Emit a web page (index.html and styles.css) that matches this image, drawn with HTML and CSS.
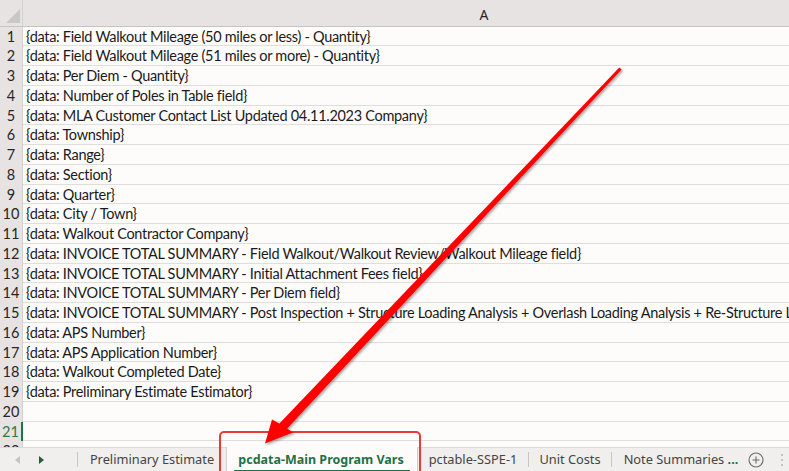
FILE: index.html
```html
<!DOCTYPE html>
<html>
<head>
<meta charset="utf-8">
<link rel="stylesheet" href="styles.css">
</head>
<body>
<div class="sheet">
  <div class="colhead">
    <div class="corner"><svg width="22" height="26" viewBox="0 0 22 26"><polygon points="20,9 20,23 6,23" fill="#c9c7c6"/></svg></div>
    <div class="colA">A</div>
  </div>
  <div class="rows">
    <div class="row"><div class="rh">1</div><div class="cell">{data: Field Walkout Mileage (50 miles or less) - Quantity}</div></div>
    <div class="row"><div class="rh">2</div><div class="cell">{data: Field Walkout Mileage (51 miles or more) - Quantity}</div></div>
    <div class="row"><div class="rh">3</div><div class="cell">{data: Per Diem - Quantity}</div></div>
    <div class="row"><div class="rh">4</div><div class="cell">{data: Number of Poles in Table field}</div></div>
    <div class="row"><div class="rh">5</div><div class="cell">{data: MLA Customer Contact List Updated 04.11.2023 Company}</div></div>
    <div class="row"><div class="rh">6</div><div class="cell">{data: Township}</div></div>
    <div class="row"><div class="rh">7</div><div class="cell">{data: Range}</div></div>
    <div class="row"><div class="rh">8</div><div class="cell">{data: Section}</div></div>
    <div class="row"><div class="rh">9</div><div class="cell">{data: Quarter}</div></div>
    <div class="row"><div class="rh">10</div><div class="cell">{data: City / Town}</div></div>
    <div class="row"><div class="rh">11</div><div class="cell">{data: Walkout Contractor Company}</div></div>
    <div class="row"><div class="rh">12</div><div class="cell">{data: INVOICE TOTAL SUMMARY - Field Walkout/Walkout Review/Walkout Mileage field}</div></div>
    <div class="row"><div class="rh">13</div><div class="cell">{data: INVOICE TOTAL SUMMARY - Initial Attachment Fees field}</div></div>
    <div class="row"><div class="rh">14</div><div class="cell">{data: INVOICE TOTAL SUMMARY - Per Diem field}</div></div>
    <div class="row"><div class="rh">15</div><div class="cell">{data: INVOICE TOTAL SUMMARY - Post Inspection + Structure Loading Analysis + Overlash Loading Analysis + Re-Structure Loading Analysis}</div></div>
    <div class="row"><div class="rh">16</div><div class="cell">{data: APS Number}</div></div>
    <div class="row"><div class="rh">17</div><div class="cell">{data: APS Application Number}</div></div>
    <div class="row"><div class="rh">18</div><div class="cell">{data: Walkout Completed Date}</div></div>
    <div class="row"><div class="rh">19</div><div class="cell">{data: Preliminary Estimate Estimator}</div></div>
    <div class="row"><div class="rh">20</div><div class="cell"></div></div>
    <div class="row active"><div class="rh">21</div><div class="cell"></div></div>
    <div class="row"><div class="rh">22</div><div class="cell"></div></div>
  </div>
  <div class="tabbar">
    <div class="nav">
      <svg width="8" height="10" viewBox="0 0 8 10" class="navl"><polygon points="6,1 6,9 1,5" fill="#c4c4c4"/></svg>
      <svg width="8" height="10" viewBox="0 0 8 10" class="navr"><polygon points="2,1 2,9 7,5" fill="#1f5f3a"/></svg>
    </div>
    <div class="sep"></div>
    <div class="tab t1">Preliminary Estimate</div>
    <div class="tab t2 current"><span>pcdata-Main Program Vars</span></div>
    <div class="tab t3">pctable-SSPE-1</div>
    <div class="sep"></div>
    <div class="tab t4">Unit Costs</div>
    <div class="sep"></div>
    <div class="tab t5">Note Summaries <b class="more">...</b></div>
    <div class="plus"><svg width="16" height="16" viewBox="0 0 16 16"><circle cx="8" cy="8" r="7" fill="none" stroke="#6b6b6b" stroke-width="1.1"/><path d="M8 4.5v7M4.5 8h7" stroke="#6b6b6b" stroke-width="1.1"/></svg></div>
    <div class="kebab"><svg width="4" height="14" viewBox="0 0 4 14"><circle cx="2" cy="2" r="1" fill="#b5b5b5"/><circle cx="2" cy="7" r="1" fill="#b5b5b5"/><circle cx="2" cy="12" r="1" fill="#b5b5b5"/></svg></div>
  </div>
  <div class="callout"></div>
  <svg class="arrow" width="789" height="471" viewBox="0 0 789 471">
    <defs>
      <filter id="sh" x="-10%" y="-10%" width="130%" height="130%">
        <feDropShadow dx="1.5" dy="1.5" stdDeviation="1.2" flood-color="#000" flood-opacity="0.35"/>
      </filter>
    </defs>
    <polygon filter="url(#sh)" fill="#ff0000" points="619.3,67.6 621.6,69.6 287.2,428.6 293,432.5 265,443.5 272,419.5 279.4,423.6"/>
  </svg>
</div>
</body>
</html>
```

FILE: styles.css
```css
html, body {
  margin: 0;
  padding: 0;
}
body {
  width: 789px;
  height: 471px;
  overflow: hidden;
  background: #fefcfb;
}
.sheet {
  position: relative;
  width: 789px;
  height: 471px;
  overflow: hidden;
  display: flex;
  flex-direction: column;
}
.colhead {
  height: 26.5px;
  box-sizing: border-box;
  display: flex;
  background: #e6e3e2;
  border-bottom: 1px solid #c6c4c3;
  flex: none;
}
.corner {
  width: 23px;
  flex: none;
  box-sizing: border-box;
  border-right: 1px solid #d3d1d0;
}
.corner svg { display: block; }
.colA {
  width: 922px;
  flex: none;
  text-align: center;
  font-family: "Noto Sans", sans-serif;
  font-size: 14px;
  color: #262626;
  line-height: 26px;
  padding-top: 2px;
  box-sizing: border-box;
}
.rows {
  flex: 1;
  overflow: hidden;
  display: flex;
  flex-direction: column;
}
.row {
  height: 19.75px;
  flex: none;
  display: flex;
  box-sizing: border-box;
  border-bottom: 1px solid #e0dedd;
}
.rh {
  width: 23px;
  flex: none;
  box-sizing: border-box;
  background: #e6e3e2;
  border-right: 1px solid #d3d1d0;
  text-align: center;
  font-family: "Lato", sans-serif;
  font-size: 14.5px;
  color: #262626;
  line-height: 20px;
  margin-bottom: -1px;
}
.row.active .rh {
  color: #2b7a4b;
  border-right: 2px solid #217346;
}
.cell {
  flex: none;
  width: 1000px;
  padding-left: 3px;
  white-space: nowrap;
  overflow: hidden;
  font-family: "Lato", sans-serif;
  font-size: 14.5px;
  letter-spacing: -0.3px;
  color: #1a1a1a;
  line-height: 20px;
}
.tabbar {
  height: 24px;
  flex: none;
  box-sizing: border-box;
  background: #f0efee;
  border-top: 1px solid #dcdad9;
  display: flex;
  align-items: center;
  font-family: "Noto Sans", sans-serif;
  font-size: 12.8px;
  color: #444;
}
.nav {
  width: 77px;
  flex: none;
  display: flex;
  align-items: center;
}
.navl { margin-left: 14px; }
.navr { margin-left: 15px; }
.nav svg { display: block; }
.sep {
  width: 1px;
  height: 15px;
  background: #c8c6c5;
  flex: none;
}
.tab {
  flex: none;
  text-align: center;
  white-space: nowrap;
  line-height: 23px;
}
.t1 { width: 148px; }
.t2 { width: 192px; }
.t3 { width: 110px; }
.t4 { width: 82px; }
.t5 { width: 136px; padding-left: 2px; box-sizing: border-box; }
.current {
  align-self: stretch;
  background: #fefcfb;
  box-sizing: border-box;
  border-left: 1px solid #d0cecd;
  border-right: 1px solid #d0cecd;
  margin-top: -1px;
  color: #1e7145;
  font-weight: 700;
  font-size: 12.5px;
  position: relative;
}
.current span {
  display: inline-block;
  line-height: 20px;
  padding-top: 3px;
  border-bottom: 2px solid #1e7145;
  padding-left: 4px;
  padding-right: 6px;
}
.more {
  color: #1e7145;
  font-weight: 700;
}
.plus {
  flex: none;
  width: 16px;
  display: flex;
  justify-content: center;
}
.plus svg, .kebab svg { display: block; }
.kebab {
  flex: none;
  margin-left: 16px;
}
.callout {
  position: absolute;
  left: 219px;
  top: 431px;
  width: 202px;
  height: 50px;
  box-sizing: border-box;
  border: 2px solid #e63b36;
  border-radius: 5px;
}
.arrow {
  position: absolute;
  left: 0;
  top: 0;
  pointer-events: none;
}
```
